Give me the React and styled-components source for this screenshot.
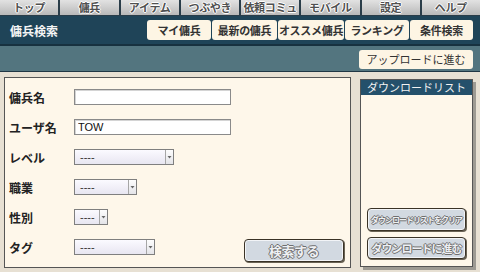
import React from 'react';
import styled, { createGlobalStyle } from 'styled-components';

const GlobalStyle = createGlobalStyle`
  html, body { margin: 0; padding: 0; background: #e7e0d3; }
  body { font-family: "Noto Sans CJK JP", "Noto Sans", sans-serif; }
  * { box-sizing: border-box; }
`;

const Page = styled.div`
  width: 480px;
  height: 272px;
  overflow: hidden;
  display: flex;
  flex-direction: column;
  background: #e7e0d3;
`;

const TabBar = styled.nav`
  display: grid;
  grid-template-columns: repeat(8, 1fr);
  column-gap: 2px;
  height: 16px;
  background: #2a3d49;
  padding-bottom: 1px;
`;

const Tab = styled.div`
  display: flex;
  align-items: center;
  justify-content: center;
  background: linear-gradient(#e2e2e2, #b9b9b9);
  font-size: 11px;
  font-weight: bold;
  line-height: 1;
  letter-spacing: -0.3px;
  color: #505050;
  text-shadow: 1px 0 #fff, -1px 0 #fff, 0 1px #fff, 0 -1px #fff;
`;

const Header = styled.header`
  height: 28px;
  display: flex;
  align-items: center;
  background: #1f4458;
  padding: 0 7px 0 10px;
`;

const Title = styled.h1`
  margin: 0;
  font-size: 12px;
  font-weight: bold;
  color: #f4f4f4;
  flex: 1;
`;

const NavGroup = styled.div`
  display: flex;
  gap: 1px;
`;

const NavButton = styled.div`
  width: ${p => p.$w}px;
  height: 20px;
  display: flex;
  align-items: center;
  justify-content: center;
  background: #fdf5e4;
  border-radius: 3px;
  font-size: 11px;
  font-weight: bold;
  color: #333;
  letter-spacing: -0.3px;
  white-space: nowrap;
`;

const SubBar = styled.div`
  height: 28px;
  border-top: 2px solid #17313f;
  border-bottom: 1px solid #1f3644;
  background: #53757f;
  display: flex;
  align-items: center;
  justify-content: flex-end;
  padding: 1px 7px 0 0;
`;

const UploadButton = styled.div`
  width: 114px;
  height: 19px;
  display: flex;
  align-items: center;
  justify-content: center;
  background: #fdf5e4;
  border-radius: 3px;
  font-size: 11px;
  color: #333;
`;

const Main = styled.main`
  flex: 1;
  display: flex;
  align-items: flex-start;
  gap: 9px;
  padding: 5px 0 0 4px;
`;

const FormPanel = styled.section`
  width: 347px;
  height: 191px;
  border: 1px solid #555;
  background: #fef7ea;
  padding: 4px 6px 0 4px;
  display: flex;
  flex-direction: column;
`;

const Row = styled.div`
  height: 30px;
  display: flex;
  align-items: center;
`;

const Label = styled.label`
  width: 65px;
  font-size: 12px;
  font-weight: bold;
  color: #222;
`;

const TextInput = styled.input`
  width: 157px;
  height: 16px;
  border: 1px solid #8a8a8a;
  box-shadow: inset 1px 1px 0 #d4d4d4;
  background: #fff;
  padding: 0 3px;
  font-family: "Liberation Sans", Arial, sans-serif;
  font-size: 11px;
  color: #111;
  outline: none;
`;

const SelectBox = styled.div`
  width: ${p => p.$w}px;
  height: 16px;
  border: 1px solid #7f7f7f;
  background: linear-gradient(#fbfaff, #e8e6f1);
  display: flex;
  align-items: stretch;
`;

const SelectText = styled.span`
  flex: 1;
  padding-left: 5px;
  font-family: "Liberation Sans", Arial, sans-serif;
  font-size: 11px;
  line-height: 14px;
  color: #333;
`;

const SelectArrow = styled.span`
  width: 8px;
  border-left: 1px solid #a6a6a6;
  background: linear-gradient(#fdfdfd, #e4e4e8);
  display: flex;
  align-items: center;
  justify-content: center;
`;

const EmbossButton = styled.button`
  width: ${p => p.$w}px;
  height: ${p => p.$h}px;
  margin-left: ${p => (p.$push ? 'auto' : '0')};
  align-self: ${p => (p.$end ? 'flex-end' : 'auto')};
  border: 1px solid #3a3326;
  border-radius: 4px;
  box-shadow: inset 0 0 0 1px #f2f4f7, 1px 1px 0 #6b6455;
  background: #d2d9e1;
  padding: 0;
  display: flex;
  align-items: center;
  justify-content: center;
  overflow: hidden;
  font-family: "Noto Sans CJK JP", sans-serif;
  font-size: ${p => p.$fs}px;
  font-weight: bold;
  letter-spacing: ${p => p.$ls || 0}px;
  white-space: nowrap;
  color: #eef0f3;
  text-shadow: 1px 0 #6f6f6f, -1px 0 #6f6f6f, 0 1px #6f6f6f, 0 -1px #6f6f6f;
`;

const ListPanel = styled.aside`
  width: 113px;
  height: 188px;
  margin-top: 2px;
  border: 1px solid #555;
  background: #fef7ea;
  box-shadow: 3px 3px 0 #9d9a93;
  display: flex;
  flex-direction: column;
`;

const ListHeader = styled.div`
  height: 15px;
  background: #24506b;
  color: #f2f2f2;
  font-size: 11px;
  line-height: 15px;
  padding-left: 6px;
`;

const ListBody = styled.div`
  flex: 1;
  display: flex;
  flex-direction: column;
  justify-content: flex-end;
  gap: 6px;
  padding: 0 5px 7px 6px;
`;

const tabs = ['トップ', '傭兵', 'アイテム', 'つぶやき', '依頼コミュ', 'モバイル', '設定', 'ヘルプ'];
const navs = [
  ['マイ傭兵', 64],
  ['最新の傭兵', 65],
  ['オススメ傭兵', 66],
  ['ランキング', 64],
  ['条件検索', 63],
];

const Arrow = () => (
  <svg width="5" height="4" viewBox="0 0 5 4">
    <path d="M0.5 1 L4.5 1 L2.5 3.5 Z" fill="#666" />
  </svg>
);

const Select = ({ w }) => (
  <SelectBox $w={w}>
    <SelectText>----</SelectText>
    <SelectArrow><Arrow /></SelectArrow>
  </SelectBox>
);

export default function App() {
  return (
    <Page>
      <GlobalStyle />
      <TabBar>
        {tabs.map(t => <Tab key={t}>{t}</Tab>)}
      </TabBar>
      <Header>
        <Title>傭兵検索</Title>
        <NavGroup>
          {navs.map(([t, w]) => <NavButton key={t} $w={w}>{t}</NavButton>)}
        </NavGroup>
      </Header>
      <SubBar>
        <UploadButton>アップロードに進む</UploadButton>
      </SubBar>
      <Main>
        <FormPanel>
          <Row>
            <Label>傭兵名</Label>
            <TextInput readOnly value="" />
          </Row>
          <Row>
            <Label>ユーザ名</Label>
            <TextInput readOnly value="TOW" />
          </Row>
          <Row>
            <Label>レベル</Label>
            <Select w={100} />
          </Row>
          <Row>
            <Label>職業</Label>
            <Select w={63} />
          </Row>
          <Row>
            <Label>性別</Label>
            <Select w={34} />
          </Row>
          <Row>
            <Label>タグ</Label>
            <Select w={81} />
            <EmbossButton $w={100} $h={23} $fs={13} $ls={-0.5} $push $end>検索する</EmbossButton>
          </Row>
        </FormPanel>
        <ListPanel>
          <ListHeader>ダウンロードリスト</ListHeader>
          <ListBody>
            <EmbossButton $w={99} $h={23} $fs={8} $ls={-1}>ダウンロードリストをクリア</EmbossButton>
            <EmbossButton $w={99} $h={22} $fs={11} $ls={-1}>ダウンロードに進む</EmbossButton>
          </ListBody>
        </ListPanel>
      </Main>
    </Page>
  );
}
